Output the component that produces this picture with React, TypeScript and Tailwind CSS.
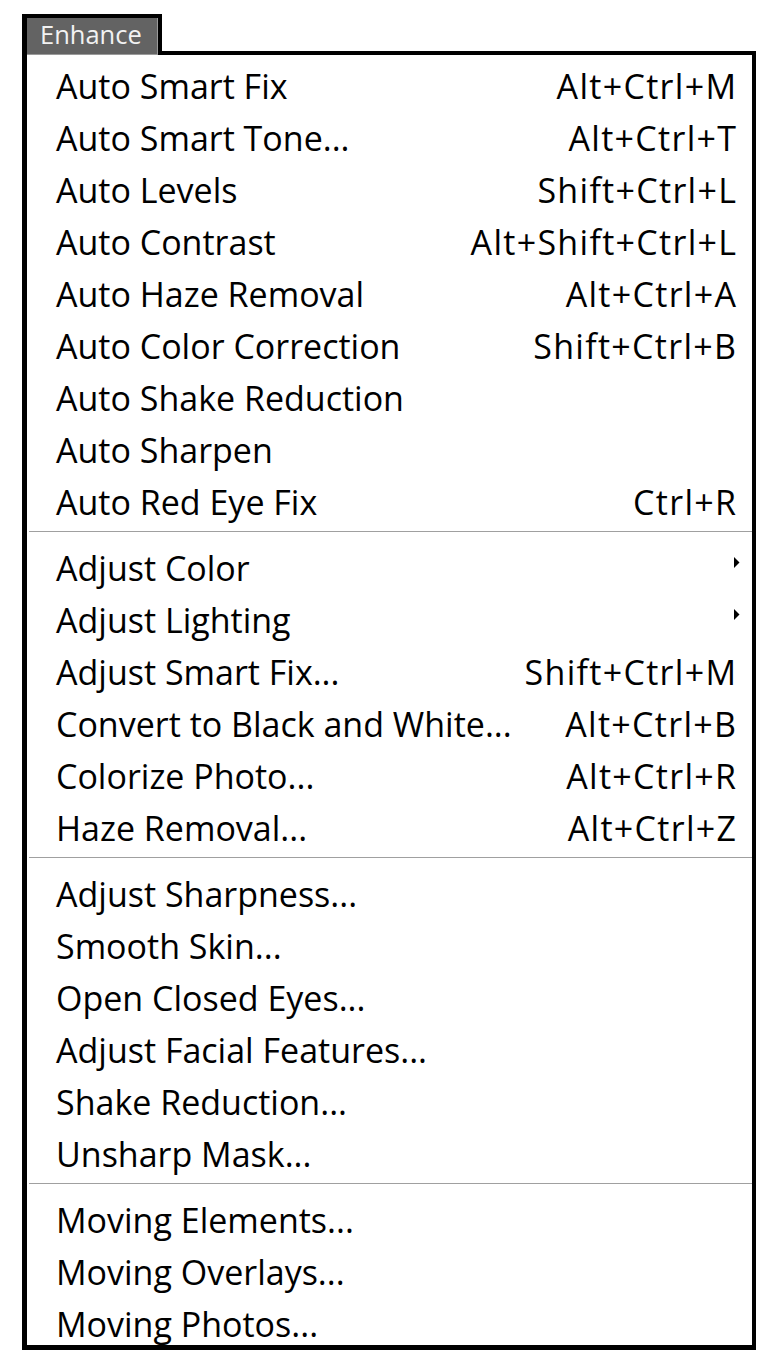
import React from "react";

type Item = { label: string; shortcut?: string; submenu?: boolean };

const sections: Item[][] = [
  [
    { label: "Auto Smart Fix", shortcut: "Alt+Ctrl+M" },
    { label: "Auto Smart Tone...", shortcut: "Alt+Ctrl+T" },
    { label: "Auto Levels", shortcut: "Shift+Ctrl+L" },
    { label: "Auto Contrast", shortcut: "Alt+Shift+Ctrl+L" },
    { label: "Auto Haze Removal", shortcut: "Alt+Ctrl+A" },
    { label: "Auto Color Correction", shortcut: "Shift+Ctrl+B" },
    { label: "Auto Shake Reduction" },
    { label: "Auto Sharpen" },
    { label: "Auto Red Eye Fix", shortcut: "Ctrl+R" },
  ],
  [
    { label: "Adjust Color", submenu: true },
    { label: "Adjust Lighting", submenu: true },
    { label: "Adjust Smart Fix...", shortcut: "Shift+Ctrl+M" },
    { label: "Convert to Black and White...", shortcut: "Alt+Ctrl+B" },
    { label: "Colorize Photo...", shortcut: "Alt+Ctrl+R" },
    { label: "Haze Removal...", shortcut: "Alt+Ctrl+Z" },
  ],
  [
    { label: "Adjust Sharpness..." },
    { label: "Smooth Skin..." },
    { label: "Open Closed Eyes..." },
    { label: "Adjust Facial Features..." },
    { label: "Shake Reduction..." },
    { label: "Unsharp Mask..." },
  ],
  [
    { label: "Moving Elements..." },
    { label: "Moving Overlays..." },
    { label: "Moving Photos..." },
  ],
];

function Row({ item }: { item: Item }) {
  return (
    <div className="relative flex h-[52px] items-center justify-between pl-[29px] pr-[16px] leading-none">
      <span className="whitespace-nowrap">{item.label}</span>
      {item.shortcut && (
        <span className="-mr-[1.3px] whitespace-nowrap tracking-[1.3px]">{item.shortcut}</span>
      )}
      {item.submenu && (
        <svg
          className="absolute right-[12px] top-[15px]"
          width="6"
          height="11"
          viewBox="0 0 6 11"
        >
          <polygon points="0,0 5.5,5.5 0,11" fill="#000" />
        </svg>
      )}
    </div>
  );
}

export default function App() {
  return (
    <div
      className="min-h-[1366px] w-[773px] bg-white pl-[22px] pt-[14px] text-black"
      style={{ fontFamily: '"Open Sans", "Noto Sans", sans-serif' }}
    >
      <div className="relative z-10 -mb-[4px] h-[41px] w-[140px] border-l-[5px] border-r-[4px] border-t-[4px] border-black bg-[#636363]">
        <div className="flex h-full items-center border-b border-r border-[#9a9a9a] pb-[3px] pl-[13px] text-[25.5px] leading-none text-[#f2f2f2]">
          Enhance
        </div>
      </div>
      <div className="h-[1299px] w-[734px] border-b-[5px] border-l-[5px] border-r-[4px] border-t-[4px] border-black bg-white pt-[5px] text-[34px]">
        {sections.map((sec, i) => (
          <div key={i}>
            {i > 0 && <div className="ml-[2px] mb-[10px] mt-[3px] h-px bg-[#a0a0a0]" />}
            {sec.map((it) => (
              <Row key={it.label} item={it} />
            ))}
          </div>
        ))}
      </div>
    </div>
  );
}
